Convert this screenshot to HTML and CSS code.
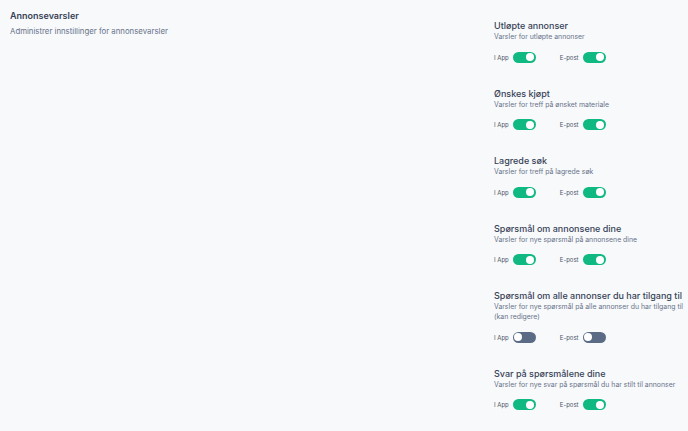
FILE: index.html
```html
<!DOCTYPE html>
<html lang="no">
<head>
<meta charset="utf-8">
<link rel="stylesheet" href="styles.css">
</head>
<body>
<div class="page">
  <div class="intro">
    <h1 class="intro-title">Annonsevarsler</h1>
    <p class="intro-sub">Administrer innstillinger for annonsevarsler</p>
  </div>
  <div class="settings">
    <section class="group">
      <h2 class="g-title">Utløpte annonser</h2>
      <p class="g-desc">Varsler for utløpte annonser</p>
      <div class="toggles">
        <label class="opt"><span class="opt-label">I App</span><span class="switch on"></span></label>
        <label class="opt"><span class="opt-label">E-post</span><span class="switch on"></span></label>
      </div>
    </section>
    <section class="group">
      <h2 class="g-title">Ønskes kjøpt</h2>
      <p class="g-desc">Varsler for treff på ønsket materiale</p>
      <div class="toggles">
        <label class="opt"><span class="opt-label">I App</span><span class="switch on"></span></label>
        <label class="opt"><span class="opt-label">E-post</span><span class="switch on"></span></label>
      </div>
    </section>
    <section class="group">
      <h2 class="g-title">Lagrede søk</h2>
      <p class="g-desc">Varsler for treff på lagrede søk</p>
      <div class="toggles">
        <label class="opt"><span class="opt-label">I App</span><span class="switch on"></span></label>
        <label class="opt"><span class="opt-label">E-post</span><span class="switch on"></span></label>
      </div>
    </section>
    <section class="group">
      <h2 class="g-title">Spørsmål om annonsene dine</h2>
      <p class="g-desc">Varsler for nye spørsmål på annonsene dine</p>
      <div class="toggles">
        <label class="opt"><span class="opt-label">I App</span><span class="switch on"></span></label>
        <label class="opt"><span class="opt-label">E-post</span><span class="switch on"></span></label>
      </div>
    </section>
    <section class="group">
      <h2 class="g-title">Spørsmål om alle annonser du har tilgang til</h2>
      <p class="g-desc">Varsler for nye spørsmål på alle annonser du har tilgang til (kan redigere)</p>
      <div class="toggles">
        <label class="opt"><span class="opt-label">I App</span><span class="switch"></span></label>
        <label class="opt"><span class="opt-label">E-post</span><span class="switch"></span></label>
      </div>
    </section>
    <section class="group">
      <h2 class="g-title">Svar på spørsmålene dine</h2>
      <p class="g-desc">Varsler for nye svar på spørsmål du har stilt til annonser</p>
      <div class="toggles">
        <label class="opt"><span class="opt-label">I App</span><span class="switch on"></span></label>
        <label class="opt"><span class="opt-label">E-post</span><span class="switch on"></span></label>
      </div>
    </section>
  </div>
</div>
</body>
</html>
```
FILE: styles.css
```css
* { box-sizing: border-box; }
html, body { margin: 0; padding: 0; }
body {
  background: #f8f9fb;
  font-family: Inter, "Noto Sans", sans-serif;
  color: #334155;
  width: 688px;
  height: 431px;
  overflow: hidden;
}
.page {
  display: flex;
  justify-content: space-between;
  padding: 10px 2px 0 10px;
}
.intro-title {
  margin: 0;
  font-size: 9px;
  line-height: 12px;
  font-weight: 600;
  color: #374257;
}
.intro-sub {
  margin: 4px 0 0;
  font-size: 7.8px;
  line-height: 10px;
  color: #67738a;
}
.settings {
  width: 192px;
  padding-top: 10px;
  display: flex;
  flex-direction: column;
  gap: 24.5px;
}
.g-title {
  margin: 0;
  font-size: 9px;
  line-height: 12px;
  font-weight: 500;
  color: #374257;
}
.g-desc {
  margin: 0;
  font-size: 6.9px;
  line-height: 10px;
  color: #67738a;
}
.toggles {
  display: flex;
  gap: 24px;
  margin-top: 9px;
  height: 12px;
  align-items: center;
}
.opt {
  display: flex;
  align-items: center;
  gap: 4px;
}
.opt-label {
  font-size: 6px;
  color: #4b5568;
}
.switch {
  position: relative;
  width: 23px;
  height: 11px;
  border-radius: 6px;
  background: #5c6b85;
}
.switch::after {
  content: "";
  position: absolute;
  top: 1.5px;
  left: 1.5px;
  width: 8px;
  height: 8px;
  border-radius: 50%;
  background: #fff;
}
.switch.on { background: #10b981; }
.switch.on::after { left: 13.5px; }
```
